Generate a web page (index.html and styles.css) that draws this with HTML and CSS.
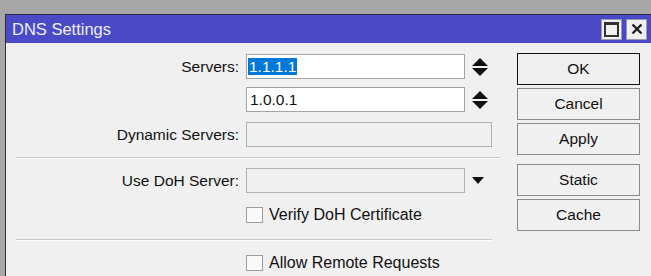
FILE: index.html
```html
<!DOCTYPE html>
<html lang="en">
<head>
<meta charset="UTF-8" />
<title>DNS Settings</title>
<link rel="stylesheet" href="styles.css">
</head>
<body>

<div class="window">
  <div class="title-bar">
    <span class="title">DNS Settings</span>
    <div class="title-buttons">
      <button class="tb-btn" title="Maximize"><span class="max-icon"></span></button>
      <button class="tb-btn" title="Close">
        <svg width="12" height="12" viewBox="0 0 12 12"><path d="M1.5 1.5 L10.5 10.5 M10.5 1.5 L1.5 10.5" stroke="#222" stroke-width="2.4"/></svg>
      </button>
    </div>
  </div>

  <div class="content">
    <div class="form">
      <div class="row row-first">
        <label class="label">Servers:</label>
        <div class="input"><span class="selected">1.1.1.1</span></div>
        <svg class="spin" width="16" height="18" viewBox="0 0 16 18"><path d="M0 8 L8 0 L16 8 Z M0 10 L16 10 L8 18 Z" fill="#111"/></svg>
      </div>
      <div class="row row-second">
        <span class="label"></span>
        <div class="input">1.0.0.1</div>
        <svg class="spin" width="16" height="18" viewBox="0 0 16 18"><path d="M0 8 L8 0 L16 8 Z M0 10 L16 10 L8 18 Z" fill="#111"/></svg>
      </div>
      <div class="row row-third">
        <label class="label">Dynamic Servers:</label>
        <div class="input input-wide disabled"></div>
      </div>

      <div class="separator"></div>

      <div class="row row-doh">
        <label class="label">Use DoH Server:</label>
        <div class="input disabled"></div>
        <svg class="drop" width="12" height="7" viewBox="0 0 12 7"><path d="M0 0 L12 0 L6 7 Z" fill="#111"/></svg>
      </div>
      <div class="row check-row check-verify">
        <span class="label"></span>
        <span class="checkbox"></span>
        <span class="check-text">Verify DoH Certificate</span>
      </div>

      <div class="separator separator-short"></div>

      <div class="row check-row check-remote">
        <span class="label"></span>
        <span class="checkbox"></span>
        <span class="check-text">Allow Remote Requests</span>
      </div>
    </div>

    <div class="buttons">
      <button class="btn btn-default">OK</button>
      <button class="btn">Cancel</button>
      <button class="btn">Apply</button>
      <button class="btn btn-spaced">Static</button>
      <button class="btn">Cache</button>
    </div>
  </div>
</div>

</body>
</html>
```

FILE: styles.css
```css
body {
  margin: 0;
  padding: 0;
  background: #a6a6a6;
  font-family: 'Liberation Sans', Arial, sans-serif;
  font-size: 15.5px;
  color: #111;
  overflow: hidden;
}
.window {
  margin: 14px 0 0 5px;
  border-top: 1px solid #2b2b3a;
  border-left: 1px solid #2b2b3a;
  background: #f0f0f0;
  height: 262px;
}
.title-bar {
  background: #4a4ac6;
  height: 28px;
  display: flex;
  align-items: center;
  padding: 0 4px 0 6px;
}
.title {
  color: #eeeefa;
  font-size: 16.5px;
  padding-top: 1px;
}
.title-buttons {
  margin-left: auto;
  display: flex;
  gap: 4px;
}
.tb-btn {
  width: 21px;
  height: 21px;
  padding: 0;
  border: 1px solid #9a9ab0;
  background: #f0f0f0;
  display: flex;
  align-items: center;
  justify-content: center;
}
.max-icon {
  width: 11px;
  height: 10px;
  border: 2px solid #333;
  border-top-width: 3px;
}
.content {
  display: flex;
}
.form {
  width: 490px;
  padding-left: 10px;
}
.row {
  display: flex;
  align-items: center;
  height: 25px;
}
.row-first { margin-top: 11px; }
.row-second { margin-top: 8px; }
.row-third { margin-top: 10px; }
.row-doh { margin-top: 9px; }
.label {
  width: 223px;
  margin-right: 7px;
  text-align: right;
  flex-shrink: 0;
}
.input {
  box-sizing: border-box;
  width: 219px;
  height: 25px;
  border: 1px solid #a3a3a3;
  background: #fff;
  padding: 2px 3px;
  line-height: 19px;
}
.input-wide {
  width: 246px;
}
.input.disabled {
  background: #f0f0f0;
  border-color: #b0b0b0;
}
.selected {
  background: #0078d7;
  color: #fff;
  padding: 0 1px;
  margin-left: -2px;
}
.spin {
  margin-left: 7px;
}
.drop {
  margin-left: 7px;
}
.separator {
  margin-top: 10px;
  width: 484px;
  height: 1px;
  background: #c8c8c8;
  border-bottom: 1px solid #fbfbfb;
}
.separator-short {
  width: 476px;
  margin-top: 16px;
}
.check-row {
  height: 17px;
}
.check-verify { margin-top: 13px; }
.check-remote { margin-top: 13px; }
.checkbox {
  box-sizing: border-box;
  width: 17px;
  height: 16px;
  border: 1px solid #9c9c9c;
  background: #f9f9f9;
}
.check-text {
  margin-left: 6px;
  font-size: 16px;
}
.buttons {
  margin-left: 11px;
  margin-top: 10px;
  display: flex;
  flex-direction: column;
  gap: 3px;
}
.btn {
  width: 123px;
  height: 32px;
  border: 1px solid #8a8a8a;
  background: #f0f0f0;
  font-family: 'Liberation Sans', Arial, sans-serif;
  font-size: 15.5px;
  color: #111;
  padding: 0;
}
.btn-default {
  border: 1px solid #111;
  box-shadow: inset 0 0 0 1px #f0f0f0;
}
.btn-spaced {
  margin-top: 6px;
}
```
